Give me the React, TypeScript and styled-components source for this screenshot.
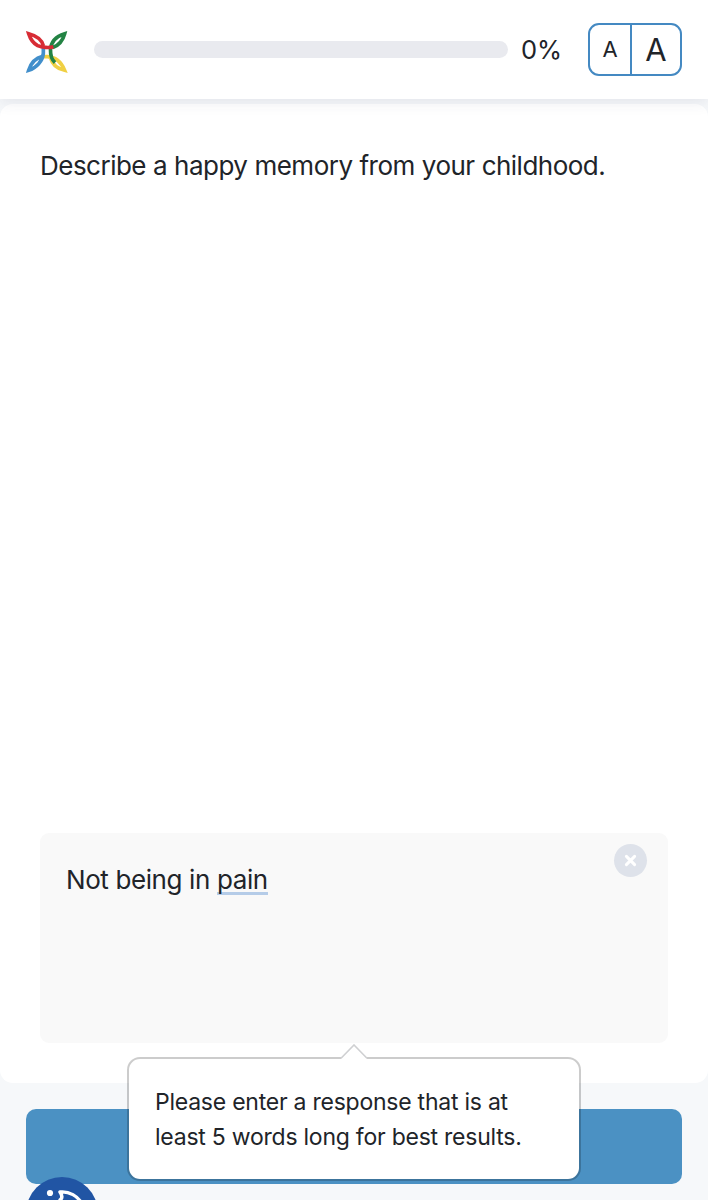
import React from "react";
import styled, { createGlobalStyle } from "styled-components";

const GlobalStyle = createGlobalStyle`
  * { box-sizing: border-box; }
  body {
    margin: 0;
    background: #f6f8fa;
    color: #212429;
    font-family: Inter, "Liberation Sans", sans-serif;
    overflow: hidden;
  }
`;

const Page = styled.div`
  display: flex;
  flex-direction: column;
  height: 1200px;
  overflow: hidden;
  position: relative;
`;

const Header = styled.header`
  display: flex;
  align-items: center;
  flex: none;
  height: 99px;
  padding: 0 26px;
  background: #fff;
  box-shadow: 0 3px 14px rgba(60, 60, 95, 0.1);
  z-index: 1;
`;

const Logo = styled.svg`
  display: block;
  flex: none;
  width: 42px;
  height: 44px;
  margin-top: 5px;
`;

const Track = styled.div`
  width: 414px;
  height: 17px;
  margin-left: 26px;
  border-radius: 9px;
  background: #e9eaef;
`;

const Percent = styled.span`
  width: 54px;
  margin-left: 13px;
  font-size: 25.5px;
  letter-spacing: -0.1px;
  line-height: 32px;
  padding-top: 1px;
`;

const SizeToggle = styled.div`
  display: flex;
  height: 53px;
  width: 94px;
  margin-left: 13px;
  border: 2px solid #4489c2;
  border-radius: 11px;
`;

const SizeButton = styled.button<{ $size: number; $width: number }>`
  width: ${(p) => p.$width}px;
  padding: 0 0 1px;
  border: 0;
  background: none;
  color: inherit;
  font-family: inherit;
  font-size: ${(p) => p.$size}px;
  & + & {
    border-left: 2px solid #4489c2;
  }
`;

const Panel = styled.main`
  display: flex;
  flex-direction: column;
  justify-content: space-between;
  height: 979px;
  margin-top: 5px;
  padding: 44px 40px 40px;
  border-radius: 13px;
  background: #fff;
`;

const Question = styled.h1`
  margin: 0;
  font-size: 26px;
  font-weight: 400;
  line-height: 36px;
  letter-spacing: -0.51px;
  word-spacing: 0.2px;
  white-space: nowrap;
`;

const Answer = styled.div`
  display: flex;
  justify-content: space-between;
  height: 210px;
  padding: 11px 21px 0 26px;
  border-radius: 9px;
  background: #f9f9f9;
`;

const AnswerText = styled.p`
  margin: 18px 0 0;
  font-size: 26px;
  line-height: 36px;
  letter-spacing: -0.45px;
  word-spacing: 0.3px;
`;

const Suggestion = styled.span`
  display: inline-block;
  height: 33px;
  border-bottom: 3px solid #b5cce8;
`;

const ClearButton = styled.button`
  display: flex;
  align-items: center;
  justify-content: center;
  width: 33px;
  height: 33px;
  padding: 0;
  border: 0;
  border-radius: 50%;
  background: #dee2ea;
`;

const Footer = styled.footer`
  padding: 26px 26px 0;
`;

const SubmitButton = styled.button`
  display: block;
  width: 100%;
  height: 75px;
  border: 0;
  border-radius: 10px;
  background: #4b91c3;
`;

const Tooltip = styled.div`
  position: absolute;
  z-index: 2;
  left: 127px;
  top: 1057px;
  width: 454px;
  height: 124px;
  padding: 26px 0 0 26px;
  border: 2px solid rgba(0, 0, 0, 0.2);
  border-radius: 13px;
  background: #fff;
  background-clip: padding-box;
  font-size: 23px;
  line-height: 35px;
  letter-spacing: -0.24px;
  white-space: nowrap;
`;

const Line = styled.span`
  display: block;
`;

const Arrow = styled.svg`
  position: absolute;
  left: 211px;
  top: -15px;
`;

const CookieButton = styled.button`
  position: absolute;
  z-index: 3;
  left: 26px;
  top: 1177px;
  width: 72px;
  height: 72px;
  padding: 0;
  border: 0;
  border-radius: 50%;
  background: #2155a4;
`;

export default function App() {
  return (
    <>
      <GlobalStyle />
      <Page>
        <Header>
          <Logo viewBox="78 60 126 132" fill="none" strokeWidth="11" strokeLinejoin="miter" strokeMiterlimit="5">
            <path stroke="#f0d043" d="M130 140H142C166 141 184 157 194 181C172 176 157 165 152 144" />
            <path stroke="#428fcb" d="M130 112V130C128 153 109 174 86 181C93 158 107 144 128 139" />
            <path stroke="#238344" d="M158 113C178 105 189 90 194 71C171 78 153 94 151.500 119C151 139 156 150 165 158" />
            <path stroke="#d72c35" d="M160 110C149 114 126 113 113 107C98 99 91 87 86 71C109 77 126 90 130 107" />
          </Logo>
          <Track />
          <Percent>0%</Percent>
          <SizeToggle>
            <SizeButton $size={22} $width={40}>A</SizeButton>
            <SizeButton $size={31} $width={50}>A</SizeButton>
          </SizeToggle>
        </Header>
        <Panel>
          <Question>Describe a happy memory from your childhood.</Question>
          <Answer>
            <AnswerText>
              Not being in <Suggestion>pain</Suggestion>
            </AnswerText>
            <ClearButton aria-label="Clear">
              <svg width="13" height="13" viewBox="0 0 13 13" fill="none" stroke="#fff" strokeWidth="3" strokeLinecap="round">
                <path d="M2.4 2.4L10.6 10.6M10.6 2.4L2.4 10.6" />
              </svg>
            </ClearButton>
          </Answer>
        </Panel>
        <Footer>
          <SubmitButton aria-label="Submit" />
        </Footer>
        <Tooltip role="tooltip">
          <Arrow width="28" height="16" viewBox="0 0 28 16">
            <path d="M1 16V14.5L14 1L27 14.5V16Z" fill="#fff" />
            <path d="M1 14.2L14 1L27 14.2" fill="none" stroke="#cfd0d2" strokeWidth="1.6" />
          </Arrow>
          <Line>Please enter a response that is at</Line>
          <Line>least 5 words long for best results.</Line>
        </Tooltip>
        <CookieButton aria-label="Cookie settings">
          <svg width="72" height="72" viewBox="0 0 72 72" fill="none" stroke="#fff" strokeWidth="3.4" strokeLinecap="round" strokeLinejoin="round">
            <circle cx="24" cy="16" r="3.1" fill="#fff" stroke="none" />
            <path d="M34 15C43 14 52 19 56 27C65 45 52 58 36 58C23 58 14 48 14 37C20 38 25 34 24 29C30 30 34 27 34 23C37 21 36 18 34 15Z" />
          </svg>
        </CookieButton>
      </Page>
    </>
  );
}
